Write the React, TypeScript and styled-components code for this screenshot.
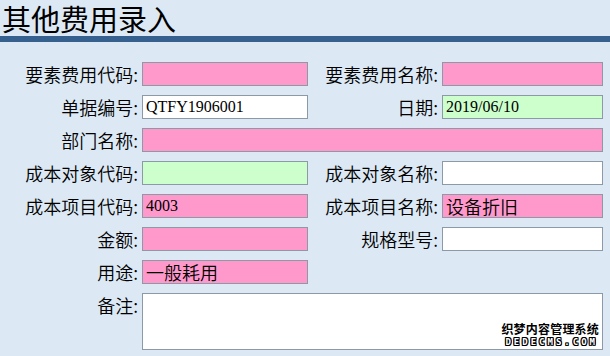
import styled, { createGlobalStyle } from 'styled-components';

// 其他费用录入表单（只读展示）
const GlobalStyle = createGlobalStyle`
  html, body {
    margin: 0;
    padding: 0;
    background: #dce9f5;
  }
  body {
    width: 610px;
    height: 356px;
    overflow: hidden;
    font-family: "Noto Sans CJK SC", "Liberation Sans", sans-serif;
    color: #000;
  }
`;

type Tone = 'pink' | 'green' | 'white';

const toneColor: Record<Tone, string> = {
  pink: '#ff99cc',
  green: '#ccffcc',
  white: '#ffffff',
};

const Page = styled.div`
  position: relative;
  width: 610px;
  height: 356px;
`;

const Header = styled.header`
  height: 36px;
  border-bottom: 6px solid #36618f;
`;

const Title = styled.h1`
  margin: 0;
  padding: 0 2px;
  font-size: 29px;
  font-weight: 400;
  line-height: normal;
  font-family: "Noto Sans CJK SC", sans-serif;
  transform: translateY(-3px);
`;

const Form = styled.div`
  display: grid;
  grid-template-columns: 142px 166px 134px 161px;
  grid-auto-rows: 24px;
  row-gap: 9px;
  padding-top: 20px;
`;

const Label = styled.label<{ $top?: boolean }>`
  align-self: ${({ $top }) => ($top ? 'start' : 'center')};
  padding-right: 4px;
  text-align: right;
  font-size: 18px;
  font-weight: 350;
  line-height: 24px;
  white-space: nowrap;
`;

const Field = styled.input<{ $tone: Tone; $cjk?: boolean; $span?: number }>`
  box-sizing: border-box;
  grid-column: span ${({ $span }) => $span ?? 1};
  width: 100%;
  height: 24px;
  margin: 0;
  padding: 0 3px;
  border: 1px solid #8c9aa8;
  border-radius: 0;
  outline: none;
  background: ${({ $tone }) => toneColor[$tone]};
  color: #000;
  font-family: ${({ $cjk }) =>
    $cjk ? '"Noto Sans CJK SC", sans-serif' : '"Liberation Serif", "Noto Sans CJK SC", serif'};
  font-size: ${({ $cjk }) => ($cjk ? '18px' : '16px')};
  font-weight: ${({ $cjk }) => ($cjk ? 350 : 400)};
`;

const Memo = styled.textarea`
  box-sizing: border-box;
  grid-column: span 3;
  width: 100%;
  height: 57px;
  margin: 0;
  padding: 2px 3px;
  border: 1px solid #8c9aa8;
  border-radius: 0;
  outline: none;
  resize: none;
  background: #fff;
  font-family: "Liberation Serif", serif;
  font-size: 16px;
`;

const MemoRow = styled.div`
  display: contents;
`;

const Watermark = styled.div`
  position: absolute;
  right: 11px;
  bottom: 10px;
  display: flex;
  flex-direction: column;
  align-items: center;
  gap: 3px;
  pointer-events: none;
`;

const WatermarkCn = styled.span`
  font-family: "Noto Sans CJK SC", sans-serif;
  font-size: 12px;
  font-weight: 700;
  line-height: 12px;
  color: #000;
  letter-spacing: 0.2px;
`;

const WatermarkEn = styled.span`
  font-family: "DejaVu Sans Mono", monospace;
  font-size: 9px;
  font-weight: 700;
  line-height: 8px;
  letter-spacing: 3px;
  margin-right: -3px;
  color: #fff;
  text-shadow: 1px 0 0 #000, -1px 0 0 #000, 0 1px 0 #000, 0 -1px 0 #000, 1px 1px 0 #000, -1px -1px 0 #000,
    1px -1px 0 #000, -1px 1px 0 #000;
`;

export default function App() {
  return (
    <Page>
      <GlobalStyle />
      <Header>
        <Title>其他费用录入</Title>
      </Header>
      <Form>
        <Label>要素费用代码:</Label>
        <Field $tone="pink" readOnly />
        <Label>要素费用名称:</Label>
        <Field $tone="pink" readOnly />

        <Label>单据编号:</Label>
        <Field $tone="white" defaultValue="QTFY1906001" readOnly />
        <Label>日期:</Label>
        <Field $tone="green" defaultValue="2019/06/10" readOnly />

        <Label>部门名称:</Label>
        <Field $tone="pink" $span={3} readOnly />

        <Label>成本对象代码:</Label>
        <Field $tone="green" readOnly />
        <Label>成本对象名称:</Label>
        <Field $tone="white" readOnly />

        <Label>成本项目代码:</Label>
        <Field $tone="pink" defaultValue="4003" readOnly />
        <Label>成本项目名称:</Label>
        <Field $tone="pink" $cjk defaultValue="设备折旧" readOnly />

        <Label>金额:</Label>
        <Field $tone="pink" readOnly />
        <Label>规格型号:</Label>
        <Field $tone="white" readOnly />

        <Label>用途:</Label>
        <Field $tone="pink" $cjk defaultValue="一般耗用" readOnly />
        <div />
        <div />

        <MemoRow>
          <Label $top>备注:</Label>
          <Memo readOnly />
        </MemoRow>
      </Form>
      <Watermark>
        <WatermarkCn>织梦内容管理系统</WatermarkCn>
        <WatermarkEn>DEDECMS.COM</WatermarkEn>
      </Watermark>
    </Page>
  );
}
